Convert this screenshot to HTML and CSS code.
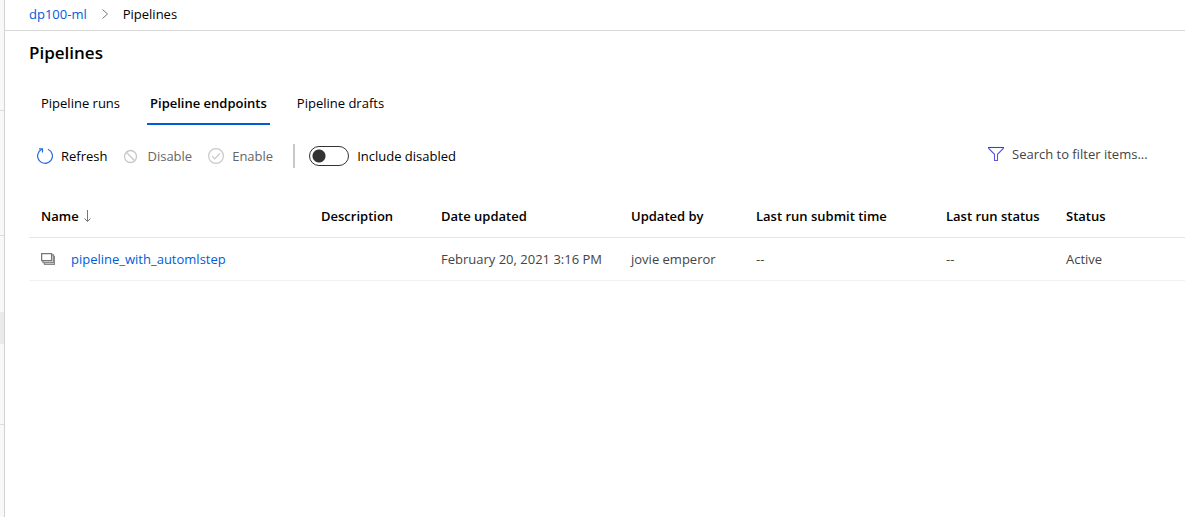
FILE: index.html
```html
<!DOCTYPE html>
<html lang="en">
<head>
<meta charset="utf-8">
<title>Pipelines</title>
<link rel="stylesheet" href="styles.css">
</head>
<body>
<div class="app">
  <aside class="rail">
    <div class="rail-group rail-top"></div>
    <div class="rail-group rail-author"></div>
    <div class="rail-group rail-assets"><div class="rail-selected"></div></div>
  </aside>
  <div class="page">
    <nav class="breadcrumb" aria-label="Breadcrumb">
      <a href="#">dp100-ml</a>
      <svg class="chevron" width="8" height="12" viewBox="0 0 8 12"><path d="M1.500 1.500 6.500 6l-5 4.500" fill="none" stroke="#777" stroke-width="1"/></svg>
      <span>Pipelines</span>
    </nav>
    <main class="content">
      <h1 class="title">Pipelines</h1>
      <div class="tabs" role="tablist">
        <button class="tab" role="tab" aria-selected="false">Pipeline runs</button>
        <button class="tab tab-active" role="tab" aria-selected="true">Pipeline endpoints</button>
        <button class="tab" role="tab" aria-selected="false">Pipeline drafts</button>
      </div>
      <div class="toolbar">
        <button class="command">
          <svg width="16" height="16" viewBox="0 0 16 16" fill="none" stroke="#2a6be0" stroke-width="1.200"><path d="M11 1.200A7.400 7.400 0 1 1 4.800 1.300"/><path d="M2 .9H5.500V4.600"/></svg>
          Refresh
        </button>
        <button class="command" disabled>
          <svg width="16" height="16" viewBox="0 0 16 16" fill="none" stroke="#c8c8c8" stroke-width="1.300"><circle cx="7.500" cy="8.500" r="6"/><path d="m3.300 4.300 8.400 8.400"/></svg>
          Disable
        </button>
        <button class="command" disabled>
          <svg width="16" height="16" viewBox="0 0 16 16" fill="none" stroke="#c8c8c8" stroke-width="1.200"><circle cx="8" cy="8" r="7.400"/><path d="m4 8.200 2.700 2.700L12 5.500"/></svg>
          Enable
        </button>
        <span class="divider"></span>
        <label class="toggle"><input type="checkbox" role="switch">Include disabled</label>
        <label class="filter">
          <svg width="16" height="16" viewBox="0 0 16 16" fill="none" stroke="#5a55e0" stroke-width="1.100"><path d="M.7 1.500v1L6.500 8.300v6.200h3V8.300l5.800-5.800v-1"/><path d="M0 1.500h16" stroke="#015cda"/></svg>
          <input type="text" placeholder="Search to filter items..." aria-label="Search to filter items">
        </label>
      </div>
      <table class="grid">
        <colgroup><col class="c-name"><col class="c-short"><col class="c-long"><col class="c-by"><col class="c-long"><col class="c-short"><col></colgroup>
        <thead>
          <tr>
            <th><span class="sort">Name <svg width="8" height="14" viewBox="0 0 8 14" fill="none" stroke="#777" stroke-width="1"><path d="M4.500 1v11M1.500 9.500l3 3 3-3"/></svg></span></th>
            <th>Description</th><th>Date updated</th><th>Updated by</th><th>Last run submit time</th><th>Last run status</th><th>Status</th>
          </tr>
        </thead>
        <tbody>
          <tr>
            <td><div class="name-cell"><svg width="14" height="12" viewBox="0 0 14 12" fill="none" stroke="#888" stroke-width="1.300"><rect x=".6" y=".6" width="10" height="7" stroke="#777"/><path d="M2 8v1.500h10.400V2H11M3.500 10v1.400h10V3.500H13"/></svg><a href="#">pipeline_with_automlstep</a></div></td>
            <td></td><td>February 20, 2021 3:16 PM</td><td>jovie emperor</td><td>--</td><td>--</td><td>Active</td>
          </tr>
        </tbody>
      </table>
    </main>
  </div>
</div>
</body>
</html>
```
FILE: styles.css
```css
* { box-sizing: border-box; }
body {
  margin: 0;
  background: #fff;
  color: #000;
  font: 13px/20px "Open Sans", "Noto Sans", sans-serif;
}
a { color: #015cda; text-decoration: none; }
button, input { font: inherit; color: inherit; }
svg { flex: none; display: block; }

.app { display: flex; min-height: 100vh; }
.rail {
  flex: none;
  width: 5px;
  background: #f8f8f8;
  border-right: 1px solid #d2d2d2;
}
.rail-group { border-bottom: 1px solid #dcdcdc; }
.rail-top { height: 111px; }
.rail-author { height: 125px; }
.rail-assets { height: 189px; padding-top: 76px; }
.rail-selected { height: 32px; background: #eaeaea; }

.page { flex: 1; min-width: 0; }
.breadcrumb {
  display: flex;
  align-items: center;
  gap: 14px;
  height: 31px;
  padding: 0 24px 2px;
  border-bottom: 1px solid #d8d8d8;
}
.content { padding: 10px 0 0 24px; }
.title {
  margin: 0;
  font-size: 17px;
  font-weight: 600;
  line-height: 24px;
}
.tabs { display: flex; gap: 24px; padding: 16px 9px 0; }
.tab {
  height: 44px;
  padding: 2px 3px 0;
  border: 0;
  border-bottom: 2px solid transparent;
  background: none;
}
.tab-active { border-color: #015cda; font-weight: 600; }

.toolbar {
  display: flex;
  align-items: center;
  height: 42px;
  margin-top: 10px;
  padding: 0 32px 0 8px;
}
.command {
  display: flex;
  align-items: center;
  gap: 8px;
  margin-right: 16px;
  padding: 0;
  border: 0;
  background: none;
}
.command:disabled { color: #666; }
.divider { width: 2px; height: 24px; margin: 0 14px 0 4px; background: #c8c8c8; }
.toggle { display: flex; align-items: center; gap: 8px; }
.toggle input {
  appearance: none;
  width: 40px;
  height: 20px;
  margin: 0;
  border: 1px solid #333;
  border-radius: 10px;
  background: radial-gradient(circle at 9px 9px, #333 6px, transparent 7px);
}
.toggle input:checked { background: radial-gradient(circle at 29px 9px, #333 6px, transparent 7px); }
.filter {
  display: flex;
  align-items: center;
  gap: 8px;
  margin-left: auto;
  padding-bottom: 4px;
}
.filter input {
  width: 141px;
  padding: 0;
  border: 0;
  outline: 0;
  background: none;
}
.filter input::placeholder { color: #444; opacity: 1; }

.grid {
  width: 100%;
  margin-top: 17px;
  border-collapse: collapse;
  table-layout: fixed;
}
.c-name { width: 280px; }
.c-short { width: 120px; }
.c-long { width: 190px; }
.c-by { width: 125px; }
.grid th, .grid td {
  height: 43px;
  padding: 0 0 0 12px;
  text-align: left;
  white-space: nowrap;
}
.grid th { padding-top: 2px; border-bottom: 1px solid #e6e6e6; font-weight: 600; }
.grid td { border-bottom: 1px solid #f1f1f1; color: #444; }
.sort { display: flex; align-items: center; gap: 4px; }
.name-cell { display: flex; align-items: center; gap: 16px; }
```
